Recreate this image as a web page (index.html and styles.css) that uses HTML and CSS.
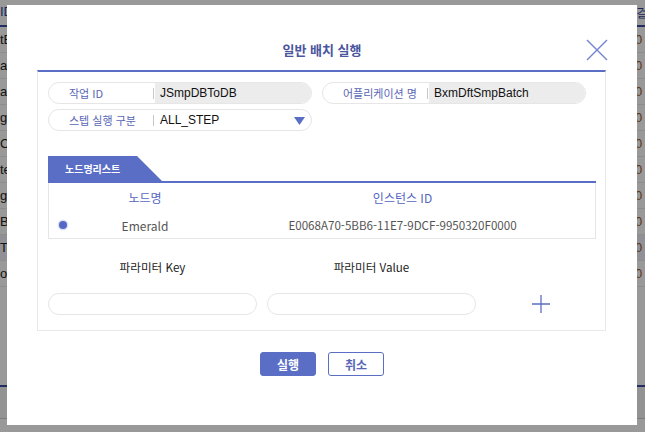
FILE: index.html
```html
<!DOCTYPE html>
<html lang="ko">
<head>
  <meta charset="UTF-8">
  <title>일반 배치 실행</title>
  <link rel="stylesheet" href="styles.css">
</head>
<body>

<div class="page">
  <div class="grid-head">
    <span class="cell-l">ID</span>
    <span class="cell-r">|걸</span>
  </div>
  <div class="grid-row"><span class="cell-l">tB</span><span class="cell-r">0</span></div>
  <div class="grid-row"><span class="cell-l">at</span><span class="cell-r">0</span></div>
  <div class="grid-row"><span class="cell-l">ag</span><span class="cell-r">0</span></div>
  <div class="grid-row"><span class="cell-l">ge</span><span class="cell-r">0</span></div>
  <div class="grid-row"><span class="cell-l">Ch</span><span class="cell-r">0</span></div>
  <div class="grid-row"><span class="cell-l">te</span><span class="cell-r">0</span></div>
  <div class="grid-row"><span class="cell-l">ge</span><span class="cell-r">0</span></div>
  <div class="grid-row"><span class="cell-l">Ba</span><span class="cell-r">0</span></div>
  <div class="grid-row sel"><span class="cell-l">To</span><span class="cell-r">0</span></div>
  <div class="grid-row"><span class="cell-l">ol</span><span class="cell-r">0</span></div>
  <div class="page-foot"></div>
</div>

<div class="dim"></div>

<div class="modal">
  <div class="modal-head">
    <h2>일반 배치 실행</h2>
    <button class="close" aria-label="닫기">
      <svg width="22" height="22" viewBox="0 0 22 22">
        <path d="M1 1 L21 21 M21 1 L1 21" stroke="#7183d0" stroke-width="1.4" fill="none"/>
      </svg>
    </button>
  </div>

  <div class="panel">
    <div class="fields">
      <div class="pill">
        <span class="pill-label">작업 ID</span>
        <span class="pill-value ro">JSmpDBToDB</span>
      </div>
      <div class="pill">
        <span class="pill-label">어플리케이션 명</span>
        <span class="pill-value ro">BxmDftSmpBatch</span>
      </div>
      <div class="pill">
        <span class="pill-label">스텝 실행 구분</span>
        <span class="pill-value">ALL_STEP</span>
        <svg class="caret" width="11" height="8" viewBox="0 0 11 8"><path d="M0 0 H11 L5.5 8 Z" fill="#5b6ec5"/></svg>
      </div>
    </div>

    <div class="tab-bar">
      <div class="tab">노드명리스트</div>
    </div>
    <div class="node-table">
      <div class="node-row head">
        <span></span>
        <span>노드명</span>
        <span>인스턴스 ID</span>
      </div>
      <div class="node-row">
        <span><i class="radio"></i></span>
        <span>Emerald</span>
        <span class="guid">E0068A70-5BB6-11E7-9DCF-9950320F0000</span>
      </div>
    </div>

    <div class="params">
      <span class="param-label">파라미터 Key</span>
      <span class="param-label">파라미터 Value</span>
      <span></span>
      <input class="param-input" type="text">
      <input class="param-input" type="text">
      <button class="add" aria-label="추가">
        <svg width="18" height="18" viewBox="0 0 18 18">
          <path d="M9 0 V18 M0 9 H18" stroke="#5b6ec5" stroke-width="1.3" fill="none"/>
        </svg>
      </button>
    </div>
  </div>

  <div class="modal-foot">
    <button class="btn primary">실행</button>
    <button class="btn">취소</button>
  </div>
</div>

</body>
</html>
```

FILE: styles.css
```css
html, body {
  margin: 0;
  width: 645px;
  height: 432px;
  overflow: hidden;
}
body {
  position: relative;
  background: #fff;
  font-family: "Noto Sans CJK KR", "Noto Sans", sans-serif;
  color: #222;
}

/* underlying grid */
.page {
  font-family: "Liberation Sans", Arial, sans-serif;
  font-size: 13px;
}
.grid-head, .grid-row {
  display: flex;
  justify-content: space-between;
  height: 26px;
  align-items: center;
  border-bottom: 1px solid #ececec;
  box-sizing: border-box;
}
.grid-head {
  height: 27px;
  border-bottom: 2px solid #3a4ca8;
  color: #2b3f9a;
  align-items: flex-start;
  padding-top: 4px;
}
.grid-row.sel {
  background: #eef2fa;
}
.cell-l {
  width: 16px;
  white-space: nowrap;
  overflow: hidden;
  color: #222;
}
.grid-head .cell-l { color: #2b3f9a; }
.cell-r {
  width: 10px;
  white-space: nowrap;
  overflow: hidden;
  color: #a45a1c;
}
.grid-head .cell-r { width: 12px; color: #2b3f9a; }
.page-foot {
  margin-top: 98px;
  height: 31px;
  border-top: 2px solid #3a4ca8;
  border-bottom: 1px solid #cfcfcf;
  background: #f6f6f6;
}

.dim {
  position: absolute;
  inset: 0;
  background: rgba(0, 0, 0, 0.4);
}

/* modal */
.modal {
  position: absolute;
  left: 7px;
  top: 5px;
  width: 630px;
  height: 420px;
  background: #fff;
  box-sizing: border-box;
}
.modal-head {
  position: relative;
  height: 65px;
  display: flex;
  align-items: flex-end;
  justify-content: center;
  padding-bottom: 12px;
  box-sizing: border-box;
}
.modal-head h2 {
  margin: 0;
  font-size: 13px;
  line-height: 16px;
  font-weight: bold;
  color: #4a569e;
}
.close {
  position: absolute;
  right: 29px;
  top: 34px;
  border: none;
  background: none;
  padding: 0;
  width: 22px;
  height: 22px;
}

.panel {
  margin: 0 31px 0 30px;
  border: 1px solid #e8e8e8;
  border-top: 2px solid #5b6ec5;
  padding: 10px 9px 15px 10px;
}
.fields {
  display: grid;
  grid-template-columns: 264px 264px;
  column-gap: 10px;
  row-gap: 5px;
}
.pill {
  position: relative;
  display: flex;
  align-items: center;
  height: 22px;
  border: 1px solid #e6e6e6;
  border-radius: 11px;
  box-sizing: border-box;
  overflow: hidden;
}
.pill-label {
  position: relative;
  width: 85px;
  padding-left: 20px;
  font-size: 11px;
  color: #5866b5;
  white-space: nowrap;
  flex: none;
}
.pill-label::after {
  content: "";
  position: absolute;
  right: 0;
  top: 3px;
  bottom: 2px;
  border-left: 1px solid #c8c8c8;
}
.pill-value {
  flex: 1;
  align-self: stretch;
  display: flex;
  align-items: center;
  padding-left: 5px;
  margin-left: 1px;
  font-family: "Liberation Sans", Arial, sans-serif;
  font-size: 12px;
  color: #111;
}
.pill-value.ro {
  background: #ececec;
}
.caret {
  position: absolute;
  right: 6px;
  top: 7px;
}

.tab-bar {
  margin-top: 25px;
  border-bottom: 2px solid #5b6ec5;
  width: 548px;
}
.tab {
  width: 114px;
  height: 25px;
  line-height: 25px;
  padding-left: 17px;
  box-sizing: border-box;
  background: #5b6ec5;
  color: #fff;
  font-size: 10px;
  font-weight: bold;
  clip-path: polygon(0 0, 89px 0, 100% 100%, 0 100%);
}
.node-table {
  width: 548px;
  border: 1px solid #e6e6e6;
  border-top: none;
  box-sizing: border-box;
}
.node-row {
  display: grid;
  grid-template-columns: 31px 130px 1fr;
  align-items: center;
  height: 26px;
  font-size: 12px;
  color: #555;
  text-align: center;
}
.node-row.head {
  height: 29px;
  color: #5466c2;
}
.guid {
  font-size: 11.6px;
}
.radio {
  display: block;
  width: 8px;
  height: 8px;
  margin-left: 10px;
  border-radius: 50%;
  background: #5468c4;
  box-shadow: 0 0 0 1.5px #dfe3f5;
}

.params {
  display: grid;
  grid-template-columns: 209px 209px 110px;
  column-gap: 10px;
  row-gap: 18px;
  margin-top: 20px;
  align-items: center;
}
.param-label {
  text-align: center;
  font-size: 11.6px;
  line-height: 16px;
  color: #222;
}
.param-input {
  height: 22px;
  box-sizing: border-box;
  border: 1px solid #e6e6e6;
  border-radius: 11px;
  outline: none;
  padding: 0 10px;
}
.add {
  border: none;
  background: none;
  padding: 0;
  width: 18px;
  height: 18px;
  justify-self: center;
}

.modal-foot {
  display: flex;
  justify-content: center;
  gap: 12px;
  margin-top: 21px;
}
.btn {
  width: 56px;
  height: 24px;
  box-sizing: border-box;
  border: 1px solid #5b6ec5;
  border-radius: 3px;
  background: #fff;
  color: #5866b5;
  font-family: "Noto Sans CJK KR", sans-serif;
  font-size: 12px;
  font-weight: bold;
  padding: 0;
}
.btn.primary {
  background: #5b6ec5;
  color: #fff;
}
```
